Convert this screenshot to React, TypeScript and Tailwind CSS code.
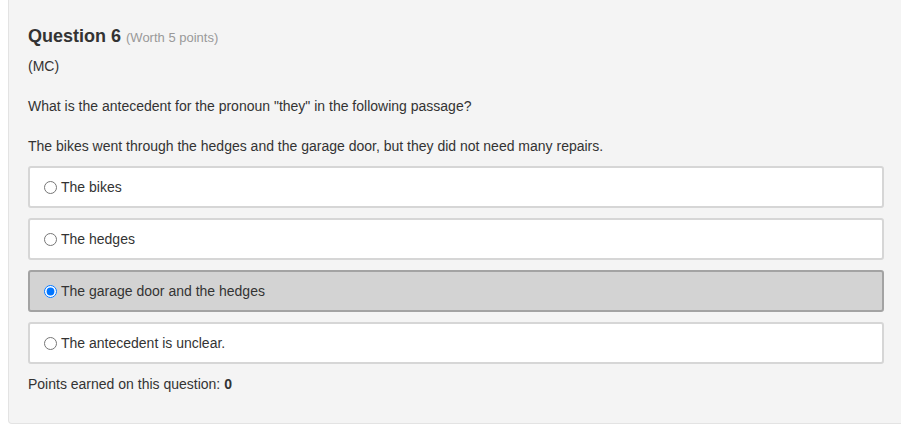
import React from 'react';

const options = [
    { id: 'a', label: 'The bikes', checked: false },
    { id: 'b', label: 'The hedges', checked: false },
    { id: 'c', label: 'The garage door and the hedges', checked: true },
    { id: 'd', label: 'The antecedent is unclear.', checked: false },
];

const Option: React.FC<{ label: string; checked: boolean }> = ({ label, checked }) => (
    <label
        className={`flex items-center h-[42px] px-[14px] rounded-[3px] border-2 ${
            checked ? 'bg-[#d3d3d3] border-[#a3a3a3]' : 'bg-white border-[#d6d6d6]'
        }`}
    >
        <input type="radio" name="q6" checked={checked} readOnly className="w-[13px] h-[13px] m-0 mr-[4px]" />
        <span className="text-[14px] leading-5 text-[#333]">{label}</span>
    </label>
);

export default function App() {
    return (
        <div className="w-[901px] h-[430px] overflow-hidden bg-white" style={{ fontFamily: '"Liberation Sans", Arial, sans-serif' }}>
            <div className="ml-[8px] w-[898px] h-[424px] bg-[#f4f4f4] border border-t-0 border-[#e3e3e3] rounded-b-[4px] pl-[19px] pr-[21px] pt-[23px]">
                <h2 className="text-[18px] leading-[26px] font-bold text-[#333]">
                    Question 6 <span className="text-[13px] font-normal text-[#999]">(Worth 5 points)</span>
                </h2>
                <p className="mt-[5px] text-[14px] leading-5 text-[#333]">(MC)</p>
                <p className="mt-[20px] text-[14px] leading-5 text-[#333]">
                    What is the antecedent for the pronoun "they" in the following passage?
                </p>
                <p className="mt-[20px] text-[14px] leading-5 text-[#333]">
                    The bikes went through the hedges and the garage door, but they did not need many repairs.
                </p>
                <div className="mt-[10px] flex flex-col gap-[10px]">
                    {options.map(o => (
                        <Option key={o.id} label={o.label} checked={o.checked} />
                    ))}
                </div>
                <p className="mt-[10px] text-[14px] leading-5 text-[#333]">
                    Points earned on this question: <b>0</b>
                </p>
            </div>
        </div>
    );
}
